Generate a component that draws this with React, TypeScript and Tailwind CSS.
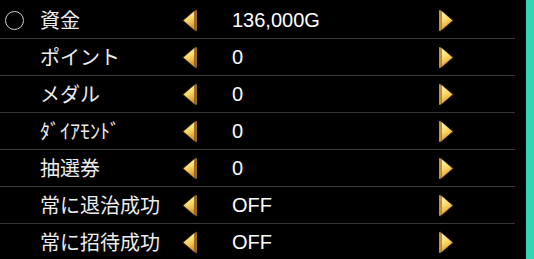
const rows = [
  { label: '資金', value: '136,000G', radio: true },
  { label: 'ポイント', value: '0' },
  { label: 'メダル', value: '0' },
  { label: 'ﾀﾞｲｱﾓﾝﾄﾞ', value: '0' },
  { label: '抽選券', value: '0' },
  { label: '常に退治成功', value: 'OFF' },
  { label: '常に招待成功', value: 'OFF' },
];

function ArrowLeft() {
  return (
    <svg width="18" height="25" viewBox="0 0 18 25" className="block">
      <defs>
        <linearGradient id="al" x1="0" y1="0" x2="0.3" y2="1">
          <stop offset="0" stopColor="#fff7c0" />
          <stop offset="0.55" stopColor="#fad866" />
          <stop offset="1" stopColor="#dc9a34" />
        </linearGradient>
      </defs>
      <polygon points="1,12.5 15,1 15,24" fill="#3a2406" />
      <polygon points="2.5,12.5 13.5,3 13.5,22" fill="url(#al)" />
      <polygon points="13.5,3 16,2 16,23 13.5,22" fill="#9a6a22" />
    </svg>
  );
}

function ArrowRight() {
  return (
    <svg width="18" height="25" viewBox="0 0 18 25" className="block">
      <defs>
        <linearGradient id="ar" x1="0" y1="0" x2="0.3" y2="1">
          <stop offset="0" stopColor="#fff7c0" />
          <stop offset="0.55" stopColor="#fad866" />
          <stop offset="1" stopColor="#dc9a34" />
        </linearGradient>
      </defs>
      <polygon points="17,12.5 3,1 3,24" fill="#3a2406" />
      <polygon points="15.5,12.5 4.5,3 4.5,22" fill="url(#ar)" />
      <polygon points="2,2 4.5,3 4.5,22 2,23" fill="#c8943a" />
    </svg>
  );
}

export default function App() {
  return (
    <div className="flex h-[259px] w-[534px] overflow-hidden bg-black">
      <div className="flex w-[515px] flex-col pt-[2px]">
        {rows.map((r) => (
          <div
            key={r.label}
            className="flex h-[37px] shrink-0 items-center border-b border-[#383838] text-[#ececec]"
          >
            <div className="flex w-[40px] shrink-0 items-center pl-[5px]">
              {r.radio && (
                <div className="h-[19px] w-[19px] rounded-full border border-[#d0d0d0]" />
              )}
            </div>
            <div
              className="w-[141px] shrink-0 text-[20px] leading-none"
              style={{ fontFamily: '"Noto Sans CJK JP", sans-serif' }}
            >
              {r.label}
            </div>
            <div className="w-[51px] shrink-0">
              <ArrowLeft />
            </div>
            <div className="w-[205px] shrink-0 font-['Liberation_Sans',sans-serif] text-[20px] leading-none text-white">
              {r.value}
            </div>
            <div className="shrink-0">
              <ArrowRight />
            </div>
          </div>
        ))}
      </div>
      <div className="ml-[11px] w-[8px] bg-[#2fd8b2]" />
    </div>
  );
}
